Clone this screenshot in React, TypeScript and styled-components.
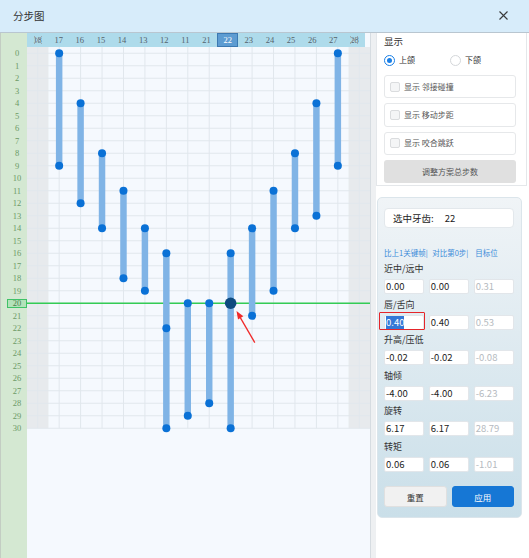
import React from 'react';
import styled, { createGlobalStyle, css } from 'styled-components';

const GlobalStyle = createGlobalStyle`
  html, body {
    margin: 0;
    padding: 0;
    background: #ffffff;
  }
  * {
    box-sizing: border-box;
  }
`;

const COLUMNS = ['18', '17', '16', '15', '14', '13', '12', '11', '21', '22', '23', '24', '25', '26', '27', '28'];
const DISABLED_COLS = [0, 15];
const SELECTED_COL = 9;
const SELECTED_ROW = 20;
const ROW_COUNT = 31;
const PLOT_W = 343;
const PLOT_H = 511;
const COL_W = PLOT_W / COLUMNS.length;
const ROW_H = 12.5;

const cx = (c: number) => COL_W * c + COL_W / 2;
const cy = (r: number) => ROW_H * r + ROW_H / 2;

interface Track {
  col: number;
  from: number;
  to: number;
  extra?: number[];
}

const TRACKS: Track[] = [
  { col: 1, from: 0, to: 9 },
  { col: 2, from: 4, to: 12 },
  { col: 3, from: 8, to: 14 },
  { col: 4, from: 11, to: 18 },
  { col: 5, from: 14, to: 19 },
  { col: 6, from: 16, to: 30, extra: [22] },
  { col: 7, from: 20, to: 29 },
  { col: 8, from: 20, to: 28 },
  { col: 9, from: 16, to: 30 },
  { col: 10, from: 14, to: 21 },
  { col: 11, from: 11, to: 19 },
  { col: 12, from: 8, to: 14 },
  { col: 13, from: 4, to: 13 },
  { col: 14, from: 0, to: 9 },
];

const DISPLAY_OPTIONS = ['显示 邻接碰撞', '显示 移动步距', '显示 咬合跳跃'];
const COLUMN_HEADINGS = ['比上1关键帧|', '对比第0步|', '目标位'];

interface Field {
  label: string;
  values: [string, string, string];
  focused?: boolean;
}

const FIELDS: Field[] = [
  { label: '近中/远中', values: ['0.00', '0.00', '0.31'] },
  { label: '唇/舌向', values: ['0.40', '0.40', '0.53'], focused: true },
  { label: '升高/压低', values: ['-0.02', '-0.02', '-0.08'] },
  { label: '轴倾', values: ['-4.00', '-4.00', '-6.23'] },
  { label: '旋转', values: ['6.17', '6.17', '28.79'] },
  { label: '转矩', values: ['0.06', '0.06', '-1.01'] },
];

const Window = styled.div`
  width: 529px;
  height: 558px;
  display: flex;
  flex-direction: column;
  overflow: hidden;
  background: #ffffff;
  font-family: "Noto Sans CJK SC", "Noto Sans", sans-serif;
`;

const TitleBar = styled.header`
  height: 33px;
  flex: none;
  display: flex;
  align-items: center;
  justify-content: space-between;
  padding: 0 21px 1px 13px;
  background: #d7ecfa;
  border-bottom: 1px solid #b9c6d0;
`;

const Title = styled.h1`
  margin: 0;
  font-size: 10.5px;
  font-weight: 400;
  line-height: 14px;
  color: #333333;
`;

const CloseButton = styled.button`
  width: 10px;
  height: 10px;
  padding: 0;
  border: none;
  background: none;
  display: flex;
  align-items: center;
  justify-content: center;
`;

const Body = styled.div`
  flex: 1;
  min-height: 0;
  display: flex;
`;

const Chart = styled.section`
  width: 370px;
  flex: none;
  display: grid;
  grid-template-columns: 27px 343px;
  grid-template-rows: 14px 1fr;
  background: #f5f9fe;
`;

const Corner = styled.div`
  background: #d4e8d2;
  border-left: 1px solid #c3cdc3;
`;

const ColumnHeader = styled.div`
  width: 338px;
  display: flex;
  background: #aedbeb;
`;

const HeaderCell = styled.div<{ $selected?: boolean }>`
  position: relative;
  flex: 1;
  display: flex;
  align-items: center;
  justify-content: center;
  font-family: "Liberation Serif", serif;
  font-size: 8.5px;
  color: #55636d;

  ${({ $selected }) =>
    $selected &&
    css`
      background: #5d9cd2;
      color: #ffffff;
      box-shadow: inset 0 0 0 1px #3c79b2;
    `}
`;

const CrossMark = styled.svg`
  position: absolute;
  left: 50%;
  top: 50%;
  width: 10px;
  height: 10px;
  transform: translate(-50%, -50%);
`;

const RowLabels = styled.div`
  display: flex;
  flex-direction: column;
  background: #d4e8d2;
  border-left: 1px solid #c3cdc3;
`;

const RowLabel = styled.div<{ $active?: boolean }>`
  height: 12.5px;
  flex: none;
  margin-left: 6px;
  display: flex;
  align-items: center;
  justify-content: center;
  font-family: "Liberation Serif", serif;
  font-size: 8.5px;
  color: #6c9a66;

  ${({ $active }) =>
    $active &&
    css`
      height: 9.5px;
      margin: 1.5px 0 1.5px 6px;
      background: #b3e2ba;
      border: 1px solid #3fc267;
      color: #4c7e4c;
    `}
`;

const PlotSvg = styled.svg`
  display: block;
`;

const Splitter = styled.div`
  width: 6px;
  flex: none;
  background: #eef0f2;
  border-left: 1px solid #d6dce1;
`;

const SidePanel = styled.aside`
  flex: 1;
  min-width: 0;
  display: flex;
  flex-direction: column;
  background: #ffffff;
`;

const DisplayCard = styled.div`
  margin-right: 2px;
  padding: 2px 10px 2px 7px;
  border: 1px solid #e4e7ea;
  border-top: none;
  display: flex;
  flex-direction: column;
`;

const CardTitle = styled.div`
  font-size: 9.5px;
  line-height: 13px;
  color: #333333;
`;

const RadioRow = styled.div`
  margin-top: 6px;
  height: 12px;
  display: flex;
  align-items: center;
`;

const RadioOption = styled.label`
  width: 66.5px;
  display: flex;
  align-items: center;
  gap: 4px;
  font-size: 8px;
  line-height: 12px;
  color: #333333;
`;

const RadioDot = styled.span<{ $checked?: boolean }>`
  width: 11px;
  height: 11px;
  flex: none;
  border-radius: 50%;
  background: #ffffff;
  border: 1px solid ${({ $checked }) => ($checked ? '#1a7fe6' : '#d4d7da')};
  display: flex;
  align-items: center;
  justify-content: center;

  &::after {
    content: '';
    width: 5px;
    height: 5px;
    border-radius: 50%;
    background: ${({ $checked }) => ($checked ? '#1a7fe6' : 'transparent')};
  }
`;

const OptionList = styled.div`
  margin-top: 9px;
  display: flex;
  flex-direction: column;
  gap: 5px;
`;

const OptionBox = styled.label`
  height: 23.3px;
  padding-left: 5px;
  display: flex;
  align-items: center;
  gap: 4px;
  border: 1px solid #e6e8ea;
  border-radius: 3px;
  background: #ffffff;
  font-size: 8px;
  line-height: 12px;
  color: #555555;
`;

const CheckBox = styled.span`
  width: 10px;
  height: 10px;
  flex: none;
  border: 1px solid #dadcde;
  border-radius: 2px;
  background: #f4f5f6;
`;

const AdjustButton = styled.button`
  height: 23.3px;
  padding: 0;
  border: none;
  border-radius: 3px;
  background: #e0e0e0;
  font-family: inherit;
  font-size: 8px;
  color: #555555;
`;

const EditCard = styled.div`
  width: 145px;
  margin: 11px 0 0 1px;
  padding: 10px 7px 10px 6px;
  border: 1px solid #dbe5eb;
  border-radius: 5px;
  background: linear-gradient(to bottom, #f0f4f7, #cadfe9);
  display: flex;
  flex-direction: column;
`;

const SelectedTooth = styled.div`
  height: 20px;
  padding-left: 8px;
  display: flex;
  align-items: center;
  border: 1px solid #e3e8ec;
  border-radius: 4px;
  background: #ffffff;
  font-size: 9.5px;
  line-height: 13px;
  color: #222222;
`;

const ToothNumber = styled.span`
  margin-left: 11px;
`;

const ThreeColumns = styled.div`
  display: grid;
  grid-template-columns: repeat(3, 1fr);
  column-gap: 4.5px;
`;

const Headings = styled(ThreeColumns)`
  margin-top: 19.5px;
  font-size: 7.5px;
  line-height: 10px;
  color: #3b8bd9;
  white-space: nowrap;
`;

const FieldList = styled.div`
  margin-top: 5.5px;
  display: flex;
  flex-direction: column;
  gap: 4.5px;
`;

const FieldGroup = styled.div`
  display: flex;
  flex-direction: column;
  gap: 4px;
`;

const FieldLabel = styled.div`
  font-size: 9px;
  line-height: 12px;
  color: #333333;
`;

const ValueBox = styled.div<{ $muted?: boolean }>`
  position: relative;
  height: 15px;
  padding-left: 1px;
  display: flex;
  align-items: center;
  border: 1px solid #e2e6ea;
  border-radius: 2px;
  background: #ffffff;
  font-size: 9.5px;
  line-height: 13px;
  color: ${({ $muted }) => ($muted ? '#b5bac0' : '#222222')};
`;

const SelectedText = styled.span`
  background: #3478d6;
  color: #ffffff;
`;

const FocusOutline = styled.span`
  position: absolute;
  left: -6.5px;
  right: -1.5px;
  top: -4px;
  bottom: -1px;
  border: 1.5px solid #e5252a;
  border-radius: 1px;
  pointer-events: none;
`;

const ButtonRow = styled.div`
  margin-top: 14.5px;
  display: grid;
  grid-template-columns: 1fr 1fr;
  gap: 5px;
`;

const ActionButton = styled.button<{ $primary?: boolean }>`
  height: 20.7px;
  padding: 0;
  border-radius: 3px;
  font-family: inherit;
  font-size: 8.5px;
  border: 1px solid ${({ $primary }) => ($primary ? '#1677d5' : '#e0e0e0')};
  background: ${({ $primary }) => ($primary ? '#1677d5' : '#f1f1f1')};
  color: ${({ $primary }) => ($primary ? '#ffffff' : '#333333')};
`;

const Plot: React.FC = () => {
  const lastRowY = cy(ROW_COUNT - 1);
  const tip = { x: 209.5, y: 264 };
  const tail = { x: 227.8, y: 295.7 };

  return (
    <PlotSvg width={PLOT_W} height={PLOT_H} viewBox={`0 0 ${PLOT_W} ${PLOT_H}`}>
      <rect width={PLOT_W} height={PLOT_H} fill="#f5f9fe" />
      {DISABLED_COLS.map((c) => (
        <rect key={c} x={c * COL_W} y={0} width={COL_W} height={lastRowY} fill="#e7eaed" />
      ))}
      {Array.from({ length: ROW_COUNT }, (_, r) => (
        <line key={`h${r}`} x1={0} x2={PLOT_W} y1={cy(r)} y2={cy(r)} stroke="#e1e7ed" strokeWidth={1} />
      ))}
      {COLUMNS.map((_, c) => (
        <line key={`v${c}`} x1={cx(c)} x2={cx(c)} y1={0} y2={lastRowY} stroke="#e1e7ed" strokeWidth={1} />
      ))}
      <line x1={0} x2={PLOT_W} y1={cy(SELECTED_ROW)} y2={cy(SELECTED_ROW)} stroke="#33cc55" strokeWidth={1.3} />

      {TRACKS.map((t) => (
        <g key={t.col}>
          <line x1={cx(t.col)} x2={cx(t.col)} y1={cy(t.from)} y2={cy(t.to)} stroke="#80b4e6" strokeWidth={6.5} />
          {[t.from, t.to, ...(t.extra ?? [])].map((r) => (
            <circle key={r} cx={cx(t.col)} cy={cy(r)} r={4} fill="#0a71d6" />
          ))}
        </g>
      ))}
      <circle cx={cx(SELECTED_COL)} cy={cy(SELECTED_ROW)} r={5.8} fill="#0d4a7f" />

      <line x1={tail.x} y1={tail.y} x2={213.3} y2={270.6} stroke="#f02a2a" strokeWidth={1.3} />
      <polygon points={`${tip.x},${tip.y} 216.3,269.2 211,272.4`} fill="#f02a2a" />
    </PlotSvg>
  );
};

export default function App() {
  return (
    <>
      <GlobalStyle />
      <Window>
        <TitleBar>
          <Title>分步图</Title>
          <CloseButton aria-label="关闭">
            <svg width="9" height="9" viewBox="0 0 9 9">
              <path d="M0.5 0.5 L8.5 8.5 M8.5 0.5 L0.5 8.5" stroke="#3a3a3a" strokeWidth="1.1" />
            </svg>
          </CloseButton>
        </TitleBar>

        <Body>
          <Chart>
            <Corner />
            <ColumnHeader>
              {COLUMNS.map((label, i) => (
                <HeaderCell key={label} $selected={i === SELECTED_COL}>
                  {label}
                  {DISABLED_COLS.includes(i) && (
                    <CrossMark viewBox="0 0 10 10">
                      <path d="M1 1 L9 9 M9 1 L1 9" stroke="#9aa3aa" strokeWidth="0.9" />
                    </CrossMark>
                  )}
                </HeaderCell>
              ))}
            </ColumnHeader>
            <RowLabels>
              {Array.from({ length: ROW_COUNT }, (_, r) => (
                <RowLabel key={r} $active={r === SELECTED_ROW}>
                  {r}
                </RowLabel>
              ))}
            </RowLabels>
            <Plot />
          </Chart>

          <Splitter />

          <SidePanel>
            <DisplayCard>
              <CardTitle>显示</CardTitle>
              <RadioRow>
                <RadioOption>
                  <RadioDot $checked />
                  上颌
                </RadioOption>
                <RadioOption>
                  <RadioDot />
                  下颌
                </RadioOption>
              </RadioRow>
              <OptionList>
                {DISPLAY_OPTIONS.map((opt) => (
                  <OptionBox key={opt}>
                    <CheckBox />
                    {opt}
                  </OptionBox>
                ))}
                <AdjustButton>调整方案总步数</AdjustButton>
              </OptionList>
            </DisplayCard>

            <EditCard>
              <SelectedTooth>
                选中牙齿:
                <ToothNumber>22</ToothNumber>
              </SelectedTooth>
              <Headings>
                {COLUMN_HEADINGS.map((h) => (
                  <span key={h}>{h}</span>
                ))}
              </Headings>
              <FieldList>
                {FIELDS.map((field) => (
                  <FieldGroup key={field.label}>
                    <FieldLabel>{field.label}</FieldLabel>
                    <ThreeColumns>
                      {field.values.map((v, i) => (
                        <ValueBox key={i} $muted={i === 2}>
                          {field.focused && i === 0 ? (
                            <>
                              <SelectedText>{v}</SelectedText>
                              <FocusOutline />
                            </>
                          ) : (
                            v
                          )}
                        </ValueBox>
                      ))}
                    </ThreeColumns>
                  </FieldGroup>
                ))}
              </FieldList>
              <ButtonRow>
                <ActionButton>重置</ActionButton>
                <ActionButton $primary>应用</ActionButton>
              </ButtonRow>
            </EditCard>
          </SidePanel>
        </Body>
      </Window>
    </>
  );
}
